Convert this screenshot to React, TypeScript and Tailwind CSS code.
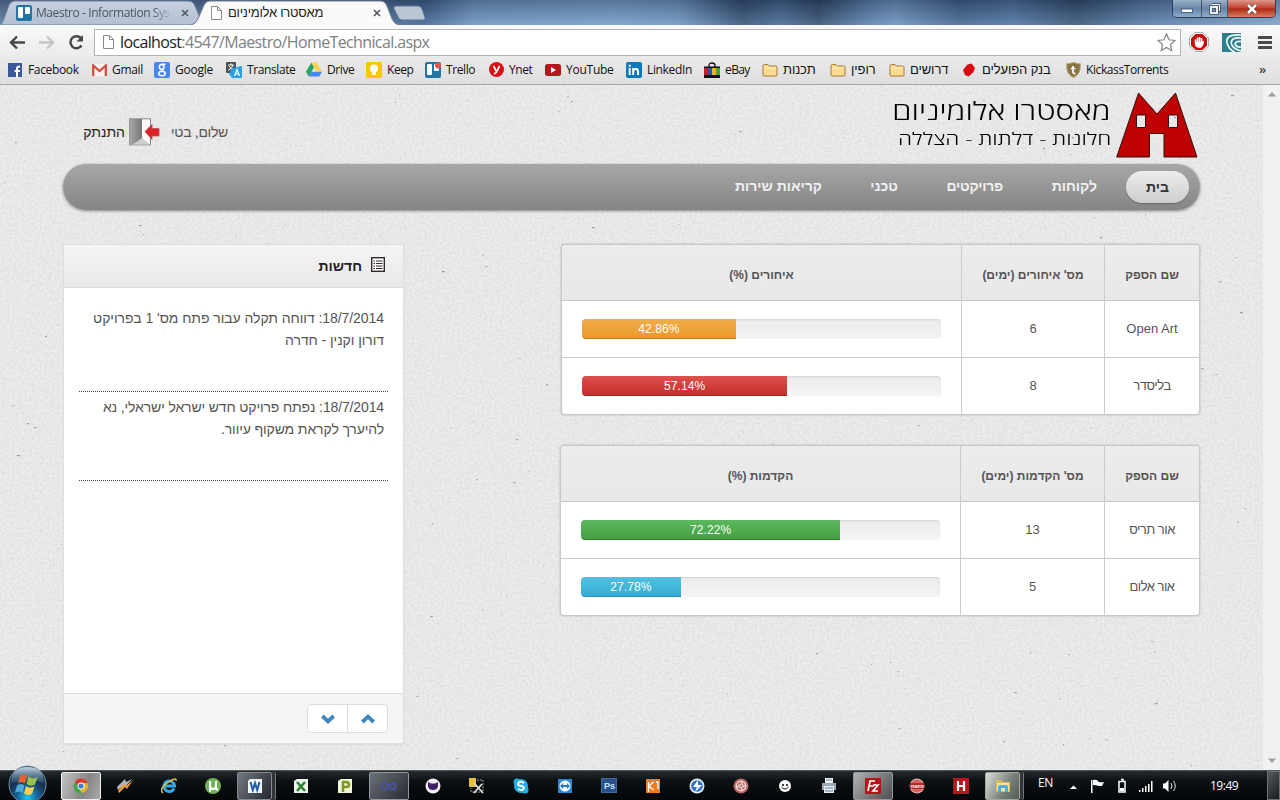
import React from "react";

const sans = "font-['Liberation_Sans',Arial,sans-serif]";
const ui = "font-['Open_Sans','Noto_Sans','Liberation_Sans',sans-serif]";

function PageIcon() {
  return (
    <svg width="11" height="14" viewBox="0 0 11 14" fill="#fdfdfd" stroke="#8a8a8a" className="shrink-0">
      <path d="M.5 .5H6.5L10.500 4.500V13.500H.5ZM6.500 .5V4.500H10.500" />
    </svg>
  );
}

function TrelloIcon({ dot = false }: { dot?: boolean }) {
  return (
    <svg width="16" height="16" viewBox="0 0 16 16" className="shrink-0">
      <rect width="16" height="16" rx="2" fill="#2175a3" />
      <rect x="2" y="2" width="5" height="11" rx="1" fill="#fff" />
      <rect x="9" y="2" width="5" height="7" rx="1" fill="#fff" />
      {dot && <circle cx="13" cy="3.500" r="3" fill="#ee4f4b" />}
    </svg>
  );
}

function Folder() {
  return (
    <svg width="16" height="16" viewBox="0 0 16 16">
      <path d="M1 13V4q0-1.500 1.500-1.500H6L7.500 4H13.500Q15 4 15 5.500V13Q15 14 14 14H2Q1 14 1 13Z" fill="#fbdc8f" stroke="#a87b34" />
      <path d="M2 6H14" stroke="#fff2c7" />
    </svg>
  );
}

const icons: Record<string, React.ReactNode> = {
  facebook: (
    <svg width="14" height="14" viewBox="0 0 14 14">
      <rect width="14" height="14" fill="#3b5998" />
      <path d="M9 14V8.500M9 8.500V5.500Q9 3.500 12 3.500M6.500 8H12" stroke="#fff" strokeWidth="2" fill="none" />
    </svg>
  ),
  gmail: (
    <svg width="15" height="12" viewBox="0 0 15 12">
      <rect width="15" height="12" rx="1" fill="#f6f3f2" />
      <path d="M1.200 12V1.500L7.500 7L13.800 1.500V12" stroke="#d5483b" strokeWidth="2.200" fill="none" />
    </svg>
  ),
  google: (
    <svg width="16" height="16" viewBox="0 0 16 16">
      <rect width="16" height="16" rx="2" fill="#4a86ee" />
      <g fill="none" stroke="#fff" strokeWidth="1.500">
        <ellipse cx="7.700" cy="5" rx="2.300" ry="2.500" />
        <ellipse cx="8" cy="11.500" rx="3.200" ry="2.300" />
        <path d="M7 2.300H11.500M9 7L8 8.500" />
      </g>
    </svg>
  ),
  translate: (
    <svg width="16" height="16" viewBox="0 0 16 16">
      <rect x="0" y="0" width="10" height="11" rx="1" fill="#4b4f55" />
      <path d="M2 3H8M5 1.500V3M7 3Q6 7 2 8.500M3 4Q5 8 8 8.500" stroke="#fff" fill="none" />
      <path d="M6 6L16 4V16H6L3 12Z" fill="#2aa1e0" />
      <path d="M8.500 14L11 7.500L13.500 14M9.500 12H12.500" stroke="#fff" strokeWidth="1.200" fill="none" />
    </svg>
  ),
  drive: (
    <svg width="17" height="15" viewBox="0 0 17 15">
      <path d="M5.700 0L8.500 5L3 15L0 10Z" fill="#1fa463" />
      <path d="M5.700 0H11.300L17 10H11.300Z" fill="#ffd04b" />
      <path d="M5.700 10H17L14 15H3Z" fill="#4688f4" />
    </svg>
  ),
  keep: (
    <svg width="16" height="16" viewBox="0 0 16 16">
      <rect width="16" height="16" rx="1" fill="#fbc700" />
      <circle cx="8" cy="6.500" r="4" fill="#fff" />
      <path d="M6 9H10V13H6Z" fill="#fff" />
    </svg>
  ),
  trello: <TrelloIcon dot />,
  ynet: (
    <svg width="15" height="15" viewBox="0 0 15 15">
      <circle cx="7.500" cy="7.500" r="7.500" fill="#d80f16" />
      <path d="M4.500 4L7.500 9.500M10.500 4L7.500 10Q6.800 11.800 4.800 11.500" stroke="#fff" strokeWidth="1.700" fill="none" />
    </svg>
  ),
  youtube: (
    <svg width="16" height="12" viewBox="0 0 16 12">
      <rect width="16" height="12" rx="2.500" fill="#b3181c" />
      <path d="M6 3L11 6L6 9Z" fill="#fff" />
    </svg>
  ),
  linkedin: (
    <svg width="16" height="16" viewBox="0 0 16 16">
      <rect width="16" height="16" rx="2" fill="#0a7bb8" />
      <path d="M3.700 6V13M3.700 2.800V4.800M7.200 13V6M7.200 9Q7.500 7 10 7Q12 7 12 9.500V13" stroke="#fff" strokeWidth="2" fill="none" />
    </svg>
  ),
  ebay: (
    <svg width="16" height="16" viewBox="0 0 16 16">
      <path d="M5 6V3.500Q5 1 8 1Q11 1 11 3.500V6" fill="none" stroke="#111" strokeWidth="1.300" />
      <rect y="5" width="4" height="9" fill="#c81b2b" />
      <rect x="4" y="5" width="4" height="9" fill="#2155b5" />
      <rect x="8" y="5" width="4" height="9" fill="#eeb715" />
      <rect x="12" y="5" width="4" height="9" fill="#55a02b" />
      <path d="M0 4.500H16V6H0ZM0 13H16V16H0Z" fill="#111" />
    </svg>
  ),
  folder: <Folder />,
  poalim: (
    <svg width="14" height="14" viewBox="0 0 14 14">
      <path d="M5.500 1.500L9.500 .5L13 5L11.500 9L6.500 13.500L3 12L1 7Z" fill="#d9050c" />
    </svg>
  ),
  kickass: (
    <svg width="15" height="16" viewBox="0 0 15 16">
      <path d="M.8 1.500Q3 2 7.500 .5Q12 2 14.200 1.500Q15.500 12 7.500 15.500Q-.5 12 .8 1.500Z" fill="#8b7444" stroke="#b8a678" />
      <path d="M7 4V10Q7 12 9.500 11.500M4.800 6.500H9.500" stroke="#fff" strokeWidth="1.700" fill="none" />
    </svg>
  ),
};

const hebrewLabel = "font-['Liberation_Sans',sans-serif] text-[13px] tracking-[-0.1px]";

const bookmarks: { icon: string; text: string; box: string; label?: string }[] = [
  { icon: "facebook", text: "Facebook", box: "w-[84px]", label: "tracking-[-0.35px]" },
  { icon: "gmail", text: "Gmail", box: "w-[63px]", label: "tracking-[-0.3px]" },
  { icon: "google", text: "Google", box: "w-[72px]", label: "tracking-[-0.25px]" },
  { icon: "translate", text: "Translate", box: "w-[80px]", label: "tracking-[-0.4px]" },
  { icon: "drive", text: "Drive", box: "w-[60px]", label: "tracking-[-0.4px]" },
  { icon: "keep", text: "Keep", box: "w-[59px]", label: "tracking-[-0.4px]" },
  { icon: "trello", text: "Trello", box: "w-[63px]", label: "tracking-[-0.4px]" },
  { icon: "ynet", text: "Ynet", box: "w-[57px]", label: "tracking-[-0.4px]" },
  { icon: "youtube", text: "YouTube", box: "w-[81px]", label: "tracking-[-0.25px]" },
  { icon: "linkedin", text: "LinkedIn", box: "w-[78px]", label: "tracking-[-0.35px]" },
  { icon: "ebay", text: "eBay", box: "w-[58px]", label: "tracking-[-0.6px]" },
  { icon: "folder", text: "תכנות", box: "w-[68px]", label: hebrewLabel },
  { icon: "folder", text: "רופין", box: "w-[59px]", label: hebrewLabel },
  { icon: "folder", text: "דרושים", box: "w-[72px]", label: hebrewLabel },
  { icon: "poalim", text: "בנק הפועלים", box: "w-[104px]", label: hebrewLabel },
  { icon: "kickass", text: "KickassTorrents", box: "w-[192px]", label: "tracking-[-0.4px]" },
];

function TabStrip() {
  return (
    <div className="relative h-[25px] shrink-0 overflow-hidden bg-[linear-gradient(90deg,#5c7898_0%,#4a678c_30%,#3b5b84_33%,#7397bf_37%,#7ba1ca_48%,#7397bf_53%,#2f4868_58%,#415f85_61%,#2c4260_64%,#5f82ab_68%,#6f93bb_70%,#3e5c82_75%,#4d6e97_79%,#2f4867_84%,#5a7ba3_90%,#89a7c9_100%)]">
      <div className="absolute inset-0 bg-[linear-gradient(180deg,rgba(20,35,60,.35),rgba(150,185,220,.3))]" />
      <svg className="absolute inset-0" width="440" height="25" viewBox="0 0 440 25">
        <defs>
          <linearGradient id="tabBack" x2="0" y2="1">
            <stop stopColor="#c6d0df" />
            <stop offset="1" stopColor="#b3c0d3" />
          </linearGradient>
        </defs>
        <path d="M0 25Q3 23 5 16L9 5Q11 1 15 1H188Q193 1 195 6L201 20Q203 25 207 25Z" fill="url(#tabBack)" stroke="#6d7f98" />
        <path d="M190 25.500Q196 24 198 19L204 5Q206 1 210 1H380Q385 1 387 6L392 19Q394 24 400 25.500Z" fill="#fafafa" stroke="#6f7f95" />
        <path d="M396 6H418Q421 6 422 9L425 17Q426 20 423 20H402Q399 20 398 17L394 9Q393 6 396 6Z" fill="#bac6d6" stroke="#60738e" />
      </svg>
      <div className={`relative flex h-[25px] items-center pl-4 text-[12px] ${ui}`}>
        <div className="flex w-[158px] items-center gap-1 text-[#4c5462]">
          <TrelloIcon />
          <span className="whitespace-nowrap tracking-[-0.42px] [mask-image:linear-gradient(90deg,#000_86%,rgba(0,0,0,.15))]">Maestro - Information Sys</span>
        </div>
        <span className="ml-[7px] w-[9px]"><Cross /></span>
        <div className="ml-[21px] flex w-[162px] items-center gap-[6px] whitespace-nowrap text-[#222]">
          <PageIcon />
          <span dir="rtl" className="font-['Liberation_Sans',sans-serif] text-[13px] tracking-[-0.25px]">מאסטרו אלומיניום</span>
        </div>
        <Cross />
      </div>
      <div className="absolute right-1 top-0 flex h-[18px] overflow-hidden rounded-b-[5px] border border-t-0 border-[#303f55]">
        <div className="flex w-[29px] items-center justify-center border-r border-[#42546e] bg-[linear-gradient(#9bb1cb,#6884a6_50%,#8daccd)]">
          <svg width="13" height="10" viewBox="0 0 13 10"><rect x=".5" y="5" width="11" height="3.500" fill="#fff" stroke="#516178" /></svg>
        </div>
        <div className="flex w-[26px] items-center justify-center border-r border-[#42546e] bg-[linear-gradient(#9bb1cb,#6884a6_50%,#8daccd)]">
          <svg width="12" height="12" viewBox="0 0 12 12" fill="none"><path d="M3 1H11V8H9" stroke="#46566c" strokeWidth="2.500" /><path d="M3 1.500H10.500V8" stroke="#fff" /><rect x="2" y="4" width="6" height="6" stroke="#46566c" strokeWidth="3.500" /><rect x="2" y="4" width="6" height="6" stroke="#fff" strokeWidth="1.800" /></svg>
        </div>
        <div className="flex w-[47px] items-center justify-center bg-[linear-gradient(#dc9789,#c2402f_48%,#ab2914_52%,#df7b5e)]">
          <svg width="12" height="10" viewBox="0 0 12 10"><path d="M2 1L10 9M10 1L2 9" stroke="#603232" strokeWidth="4" /><path d="M2 1L10 9M10 1L2 9" stroke="#fff" strokeWidth="2.500" /></svg>
        </div>
      </div>
    </div>
  );
}

function Cross() {
  return (
    <svg width="8" height="8" viewBox="0 0 8 8" className="shrink-0">
      <path d="M1 1L7 7M7 1L1 7" stroke="#555b64" strokeWidth="1.700" />
    </svg>
  );
}

function Toolbar() {
  return (
    <div className="flex h-[32px] shrink-0 items-center bg-[linear-gradient(#fafafa,#ebebeb)] pl-[9px] pt-[2px]">
      <svg width="84" height="20" viewBox="0 0 84 20" fill="none" strokeWidth="2.400" className="shrink-0">
        <path d="M16 10.500H2M8 4.500L2 10.500L8 16.500" stroke="#474747" />
        <path d="M30 10.500H44M38 4.500L44 10.500L38 16.500" stroke="#c6c6c6" />
        <path d="M72.500 7A6 6 0 1 0 72.500 13.500" stroke="#474747" />
        <path d="M74 3V9.500H67.500Z" fill="#474747" />
      </svg>
      <div className={`ml-px flex h-[27px] w-[1087px] items-center border border-[#b4b4b4] bg-white pl-2 pr-[4px] text-[16px] text-[#808080] ${ui}`}>
        <PageIcon />
        <span className="ml-[6px] tracking-[-0.63px]"><span className="text-[#222]">localhost</span>:4547/Maestro/HomeTechnical.aspx</span>
        <svg className="ml-auto" width="19" height="19" viewBox="0 0 19 19"><path d="M9.500 1L12 6.800L18 7.400L13.500 11.500L14.800 17.500L9.500 14.400L4.200 17.500L5.500 11.500L1 7.400L7 6.800Z" fill="#fff" stroke="#858585" strokeWidth="1.200" /></svg>
      </div>
      <svg className="ml-[8px]" width="20" height="20" viewBox="0 0 20 20">
        <path d="M6 .5H14L19.500 6V14L14 19.500H6L.5 14V6Z" fill="#fff" stroke="#aaa" />
        <path d="M6.500 2H13.500L18 6.500V13.500L13.500 18H6.500L2 13.500V6.500Z" fill="#c70d0d" />
        <path d="M6.500 7.500V11.500Q7 15 10 15Q13 15 13.500 12L14.500 9M8.500 11V5.500M10.500 11V5M12.500 11V6" stroke="#fff" strokeWidth="1.600" fill="none" />
        <path d="M7 10H13V13L10 15L7 13Z" fill="#fff" />
      </svg>
      <svg className="ml-[13px]" width="19" height="19" viewBox="0 0 19 19">
        <rect width="19" height="19" fill="#2f7f8c" />
        <path d="M19 2Q3 1 5 10Q7 17 13 19M19 5Q8 4 9.500 11Q11 16 19 18M19 8.500Q12 8 13.500 12Q15 14.500 19 14" stroke="#eef8f8" strokeWidth="1.700" fill="none" />
      </svg>
      <svg className="ml-[17px]" width="14" height="13" viewBox="0 0 14 13"><path d="M0 1.500H14M0 6.500H14M0 11.500H14" stroke="#4a4a4a" strokeWidth="2.800" /></svg>
    </div>
  );
}

function BookmarksBar() {
  return (
    <div className={`flex h-[28px] shrink-0 items-center overflow-hidden border-b border-[#a7a7a7] bg-[linear-gradient(#eaeaea,#dedede)] pb-[2px] pl-[7px] text-[12px] text-[#111] ${ui}`}>
      {bookmarks.map((b) => (
        <div key={b.text} className={`flex shrink-0 items-center gap-[5px] ${b.box}`}>
          <span className="flex w-[16px] shrink-0 justify-center">{icons[b.icon]}</span>
          <span className={`whitespace-nowrap ${b.label ?? ""}`}>{b.text}</span>
        </div>
      ))}
      <span className="ml-[2px] text-[13px] font-semibold text-[#444]">»</span>
    </div>
  );
}

const specks = Array.from({ length: 170 }, (_, i) => ({
  x: (i * 331 + 47 * ((i * i) % 17)) % 1260,
  y: (i * 197 + 29 * ((i * i) % 23)) % 684,
  w: 1 + (i % 3) * 0.9,
  o: 0.15 + (i % 5) * 0.07,
}));

function Paper() {
  return (
    <svg className="absolute inset-0" width="1263" height="685" viewBox="0 0 1263 685">
      <filter id="grain" x="0" y="0" width="100%" height="100%">
        <feTurbulence type="fractalNoise" baseFrequency="0.4" numOctaves="3" seed="8" />
        <feColorMatrix values="0.2 0 0 0 0.77  0.2 0 0 0 0.77  0.2 0 0 0 0.77  0 0 0 0 1" colorInterpolationFilters="sRGB" />
      </filter>
      <rect width="1263" height="685" fill="#e4e4e4" />
      <rect width="1263" height="685" filter="url(#grain)" opacity=".7" />
      {specks.map((s, i) => (
        <rect key={i} x={s.x} y={s.y} width={s.w} height="1.200" fill="#333" opacity={s.o} />
      ))}
    </svg>
  );
}

function Header() {
  return (
    <header className="flex h-[79px] items-start pl-[82px] pr-[65px] pt-[7px]">
      <div className={`mt-[26px] flex items-center text-[14px] ${sans}`}>
        <span dir="rtl" className="w-[43px] whitespace-nowrap text-[#222]">התנתק</span>
        <svg className="ml-[3px]" width="32" height="28" viewBox="0 0 32 28">
          <defs>
            <linearGradient id="door"><stop stopColor="#a7a7a7" /><stop offset="1" stopColor="#777" /></linearGradient>
          </defs>
          <rect x="1.500" y=".8" width="21" height="26" fill="#fafafa" stroke="#888" />
          <path d="M1.500 1H14V21L5 26.500H1.500Z" fill="url(#door)" />
          <path d="M5 26.500L14 20L22 26.500Z" fill="#ccc" />
          <path d="M17 13.500L24 6.500V10.500H31V18H24V21.500Z" fill="#df2024" stroke="#bb5153" strokeWidth=".8" />
        </svg>
        <span dir="rtl" className="ml-[11px] whitespace-nowrap tracking-[-0.3px] text-[#555]">שלום, בטי</span>
      </div>
      <div dir="rtl" className="ml-auto mr-[5px] mt-[3px] flex flex-col items-start whitespace-nowrap font-['Open_Sans','Noto_Sans',sans-serif] font-light text-black">
        <span className="origin-right scale-x-[1.25] text-[25px] leading-[30px]">מאסטרו אלומיניום</span>
        <span className="origin-right scale-x-[1.33] text-[17px] leading-[28px]">חלונות - דלתות - הצללה</span>
      </div>
      <svg width="82" height="67" viewBox="0 0 82 67">
        <path fillRule="evenodd" d="M22.500 1L41 22L59.500 1L81 65H48V41.500H33.500V65H.7ZM20.500 23V35.500H29.500V23ZM52.500 23V35.500H61.500V23Z" fill="#bd0000" stroke="#351010" />
      </svg>
    </header>
  );
}

function Nav() {
  return (
    <nav dir="rtl" className={`mx-[63px] flex h-[46px] w-[1137px] items-center rounded-full bg-[linear-gradient(#a7a7a7,#858585)] pb-px pr-[11px] text-[14px] font-bold text-[#f0f0f0] shadow-[0_1px_3px_rgba(0,0,0,.45)] ${sans}`}>
      <span className="flex h-[32px] w-[63px] items-center justify-center rounded-full bg-[linear-gradient(#ededed,#cdcdcd)] pt-px text-[#333] shadow-[0_1px_1px_rgba(0,0,0,.25)]">בית</span>
      <span className="mr-[29px] w-[94px] pb-px">לקוחות</span>
      <span className="w-[105px] pb-px tracking-[-0.25px]">פרויקטים</span>
      <span className="w-[76px] pb-px">טכני</span>
      <span className="pb-px">קריאות שירות</span>
    </nav>
  );
}

const news = [
  { text: "18/7/2014: דווחה תקלה עבור פתח מס' 1 בפרויקט דורון וקנין - חדרה", track: "tracking-[-0.06px]" },
  { text: "18/7/2014: נפתח פרויקט חדש ישראל ישראלי, נא להיערך לקראת משקוף עיוור.", track: "tracking-[-0.13px]" },
];

function News() {
  return (
    <section dir="rtl" className={`flex h-[500px] w-[341px] flex-col border border-[#dedede] bg-white text-[14px] shadow-[0_1px_1px_rgba(0,0,0,.05)] ${sans}`}>
      <div className="flex h-[43px] shrink-0 items-center gap-[9px] border-b border-[#ddd] bg-[linear-gradient(#f5f5f5,#e8e8e8)] pr-[18px] font-bold text-[#222]">
        <svg className="-mt-[3px]" width="14" height="15" viewBox="0 0 14 15"><rect x=".7" y=".7" width="12.600" height="13.600" fill="#fff" stroke="#332a30" strokeWidth="1.400" /><path d="M2.500 4H4M2.500 6.500H4M2.500 9H4M2.500 11.500H4M5 4H11.500M5 6.500H11.500M5 9H11.500M5 11.500H11.500" stroke="#332a30" strokeWidth="1.100" /></svg>
        <span>חדשות</span>
      </div>
      <div className="flex-1 px-[15px] pt-[15px]">
        {news.map((n) => (
          <p key={n.text} className={`h-[89px] border-b border-dotted border-[#444] pr-1 pt-[4px] leading-[22px] text-[#555] ${n.track}`}>{n.text}</p>
        ))}
      </div>
      <div className="h-[50px] shrink-0 border-t border-[#ddd] bg-[#f5f5f5] pr-[15px] pt-[10px]">
        <div className="flex h-[29px] w-[81px] rounded-[4px] border border-[#ddd] bg-white">
          <div className="flex flex-1 items-center justify-center"><Chevron up /></div>
          <div className="flex flex-1 items-center justify-center border-r border-[#ddd]"><Chevron /></div>
        </div>
      </div>
    </section>
  );
}

function Chevron({ up = false }: { up?: boolean }) {
  return (
    <svg width="14" height="10" viewBox="0 0 14 10">
      <path d={up ? "M1.300 8L7 2.700L12.700 8" : "M1.300 2L7 7.300L12.700 2"} fill="none" stroke="#4186bf" strokeWidth="3.800" />
    </svg>
  );
}

type Row = { name: string; days: number; pct: number; color: string; track: string };

function SupplierTable({ heads, rows, width, barCol }: { heads: string[]; rows: Row[]; width: string; barCol: string }) {
  return (
    <div dir="rtl" className={`flex h-[171px] flex-col overflow-hidden rounded-[4px] border border-[#c9c9c9] bg-white text-[13px] text-[#555] shadow-[0_0_2px_rgba(0,0,0,.25)] ${sans} ${width}`}>
      <div className="flex h-[55px] shrink-0 bg-[linear-gradient(#ececec,#e8e8e8)] text-[12px] font-bold">
        <div className="flex w-[94px] items-center justify-center pt-[5px]">{heads[0]}</div>
        <div className={`flex items-center justify-center border-r border-[#ccc] pt-[5px] ${barCol}`}>{heads[1]}</div>
        <div className="flex flex-1 items-center justify-center border-r border-[#ccc] pt-[5px]">{heads[2]}</div>
      </div>
      {rows.map((r) => (
        <div key={r.name} className="flex h-[57px] shrink-0 border-t border-[#c9c9c9]">
          <div className={`flex w-[94px] items-center justify-center ${r.track}`}>{r.name}</div>
          <div className={`flex items-center justify-center border-r border-[#ccc] ${barCol}`}>{r.days}</div>
          <div dir="ltr" className="flex flex-1 items-center border-r border-[#ccc] px-[20px]">
            <div className="h-[20px] w-full overflow-hidden rounded-[4px] bg-[linear-gradient(#ebebeb,#f5f5f5)] shadow-[inset_0_1px_2px_rgba(0,0,0,.1)]">
              <div className={`flex h-full items-center justify-center text-[12px] tracking-[0.1px] text-white shadow-[inset_0_-1px_0_rgba(0,0,0,.18)] ${r.color}`} style={{ width: `${r.pct}%` }}>{r.pct}%</div>
            </div>
          </div>
        </div>
      ))}
    </div>
  );
}

const late: Row[] = [
  { name: "Open Art", days: 6, pct: 42.86, color: "bg-[linear-gradient(#f0ad4e,#eb9722)]", track: "tracking-normal" },
  { name: "בליסדר", days: 8, pct: 57.14, color: "bg-[linear-gradient(#dc514d,#c62c2a)]", track: "tracking-[-0.45px]" },
];
const early: Row[] = [
  { name: "אור תריס", days: 13, pct: 72.22, color: "bg-[linear-gradient(#5cb85c,#429f42)]", track: "tracking-[-0.5px]" },
  { name: "אור אלום", days: 5, pct: 27.78, color: "bg-[linear-gradient(#55bfdf,#31add3)]", track: "tracking-[-0.5px]" },
];

function Page() {
  return (
    <main className="relative h-[685px] flex-1 overflow-hidden">
      <Paper />
      <div className="relative">
        <Header />
        <Nav />
        <div className="ml-[63px] mt-[34px] flex w-[1137px] items-start justify-between">
          <News />
          <div className="flex flex-col items-end gap-[30px]">
            <SupplierTable heads={["שם הספק", "מס' איחורים (ימים)", "איחורים (%)"]} rows={late} width="w-[639px]" barCol="w-[143px]" />
            <SupplierTable heads={["שם הספק", "מס' הקדמות (ימים)", "הקדמות (%)"]} rows={early} width="w-[640px]" barCol="w-[144px]" />
          </div>
        </div>
      </div>
    </main>
  );
}

function ScrollBar() {
  return (
    <div className="flex w-[17px] flex-col items-center justify-between bg-[#f1f1f1] py-[7px]">
      <svg width="8" height="5" viewBox="0 0 8 5"><path d="M0 4.500L4 0L8 4.500Z" fill="#9d9d9d" /></svg>
      <svg width="8" height="5" viewBox="0 0 8 5"><path d="M0 .5L4 5L8 .5Z" fill="#9d9d9d" /></svg>
    </div>
  );
}

const apps: { id: string; look?: string; art: React.ReactNode }[] = [
  {
    id: "chrome",
    look: "border-[#eee] bg-[linear-gradient(110deg,#c5c5c5,#858585_60%,#aaa)]",
    art: (
      <>
        <circle cx="8" cy="8" r="7" fill="#e2b828" />
        <path d="M2 4A7 7 0 0 1 14.500 5H8L5 9Z" fill="#d83a2e" />
        <path d="M2 4L6 11L9 15A7 7 0 0 1 2 4Z" fill="#3da650" />
        <circle cx="8" cy="8" r="3.500" fill="#fff" />
        <circle cx="8" cy="8" r="2.600" fill="#3f7ed2" />
      </>
    ),
  },
  { id: "winamp", art: <><path d="M0 9L8 1L9 4L15 1L9 8H6L1 12Z" fill="#b5b5b5" /><path d="M1 13L7 6L9 8L16 2L10 11L8 9L2 15Z" fill="#f09c35" /></> },
  { id: "ie", art: <g fill="none"><path d="M13 10.500A5.300 5.300 0 1 1 13.500 8H4" stroke="#37a9e7" strokeWidth="3" /><path d="M2 15Q-3 11 9 3Q16-1 15 3" stroke="#e7b83f" strokeWidth="1.500" /></g> },
  { id: "utorrent", art: <><circle cx="8" cy="8" r="8" fill="#72b256" /><path d="M5 3V8Q5 11 8 11Q11 11 11 8V3M11 8V11L13 12M5 8V14" stroke="#fff" strokeWidth="2" fill="none" /></> },
  { id: "word", look: "border-[#848b94] bg-[linear-gradient(120deg,#737980,#24292e)]", art: <><path d="M1 3L3 1H15V15H1Z" fill="#eef4fb" /><path d="M3.500 4L5.800 12L8 5L10.200 12L12.500 4" stroke="#235ca7" strokeWidth="2" fill="none" /></> },
  { id: "excel", art: <><path d="M1 3L4 1H15V15H1Z" fill="#edf5e9" /><path d="M4 4L12 13M12 4L4 13" stroke="#2a8335" strokeWidth="2.600" /></> },
  { id: "publisher", art: <><path d="M1 3L4 1H15V15H1Z" fill="#f2f5d8" /><path d="M6 14V4H9Q12 4 12 7Q12 9 9 9H6" stroke="#7d9822" strokeWidth="2.500" fill="none" /></> },
  { id: "visual-studio", look: "border-[#92989d] bg-[linear-gradient(130deg,#6a7177,#272c31)]", art: <path d="M8 8Q4 3 2 6Q0 9 3 11Q6 12 8 8Q11 4 14 6Q16 9 13 11Q11 12 8 8" stroke="#4a51a3" strokeWidth="2" fill="none" /> },
  { id: "github", art: <><circle cx="8" cy="8" r="7.500" fill="#f0edf5" /><path d="M3 8.500V4L6 5.500H10L13 4V8.500Q12 12 8 12Q4 12 3 8.500Z" fill="#3e2264" /></> },
  { id: "designer", art: <><rect width="7" height="9" fill="#e4c03d" /><path d="M8 2H14V14H2V10" fill="none" stroke="#96a082" strokeDasharray="2 1" /><path d="M5 15L13 6M5 5L14 15" stroke="#ddd" strokeWidth="1.800" /></> },
  { id: "skype", art: <><circle cx="8" cy="8" r="7" fill="#23aee6" /><circle cx="4" cy="4" r="3.500" fill="#23aee6" /><circle cx="12" cy="12" r="3.500" fill="#23aee6" /><path d="M11 5Q6 2 5 6Q5 8 9 8Q13 10 9 12Q7 12 5 11" fill="none" stroke="#fff" strokeWidth="1.900" /></> },
  { id: "teamviewer", art: <><rect x="1" y="1" width="14" height="14" fill="#2788d7" /><circle cx="8" cy="8" r="5.500" fill="#f2f8fd" /><path d="M3 8L6 5V7H10V5L13 8L10 11V9H6V11Z" fill="#2676bf" /></> },
  { id: "photoshop", art: <><rect x=".5" y=".5" width="15" height="14" fill="#29518b" stroke="#41689c" /><text x="3" y="11" fontSize="9" fontWeight="bold" fill="#cae3ff" fontFamily="Liberation Sans">Ps</text></> },
  { id: "kl", art: <><rect x="1" y="1" width="14" height="14" fill="#ef7d1f" /><path d="M3.500 14V4M8.500 4L4 8L8.500 12M11 4H13V11" stroke="#fff" strokeWidth="1.300" fill="none" /></> },
  { id: "daemon", art: <><circle cx="8" cy="8" r="7.500" fill="#e2edf8" /><circle cx="8" cy="8" r="5.800" fill="#2d71c9" /><path d="M9 2L4 9H8L6 14L13 7H9Z" fill="#fff" /></> },
  { id: "swirl", art: <><circle cx="8" cy="8" r="7.500" fill="#bd6565" /><circle cx="8" cy="8" r="4.800" fill="none" stroke="#efdcdc" strokeWidth="1.300" /><path d="M8 3L10 8M13 7L8 10M10 13L6 8M3 10L8 6" stroke="#efdcdc" strokeWidth="1.200" /></> },
  { id: "smile", art: <><circle cx="8" cy="8" r="6" fill="#fff" /><circle cx="6" cy="7" r="1" /><circle cx="10" cy="7" r="1" /><path d="M4.500 9Q8 13 11.500 9" fill="none" stroke="#111" /></> },
  { id: "printer", art: <><path d="M4 0H12V6H4Z" fill="#f4f4f4" /><path d="M1 5H15V12H1Z" fill="#99a6b3" /><path d="M3 8H13V15H3Z" fill="#e8eef3" /><path d="M4 10H12M4 13H12M5 2H11" stroke="#607e9a" /></> },
  { id: "filezilla", look: "border-[#92989d] bg-[linear-gradient(130deg,#b1b1b1,#4e4e4e)]", art: <><rect width="16" height="16" rx="1" fill="#b11517" /><path d="M3 13L5 3H10M4 8H9M8 7H13L8 13H13" stroke="#fff" strokeWidth="1.700" fill="none" /></> },
  { id: "nero", art: <><circle cx="8" cy="8" r="7.500" fill="#dba5a2" /><circle cx="8" cy="8" r="6.200" fill="#d5625d" /><rect x="1" y="5" width="14" height="6" fill="#b4282a" /><text x="2" y="10" fontSize="6" fontWeight="bold" fill="#fff" fontFamily="Liberation Sans">nero</text></> },
  { id: "h", art: <><rect width="16" height="16" fill="#af1b1c" /><path d="M5 3V13M11 3V13M5 8H11" stroke="#fff" strokeWidth="2.200" /></> },
  { id: "explorer", look: "border-[#a4a79e] bg-[linear-gradient(120deg,#dedfdb,#78807a_60%,#535b56)]", art: <><path d="M1 2H6L8 4H15V14H1Z" fill="#dfb859" /><path d="M2 5H14V13H2Z" fill="#f8e49b" /><path d="M3 14V9Q3 7 5 7H11Q13 7 13 9V14H10V10H6V14Z" fill="#4daedd" /></> },
];

function Taskbar() {
  return (
    <footer className={`relative z-10 flex h-[30px] shrink-0 items-center border-t border-[#54595e] bg-[linear-gradient(#252b2f,#0b1013_35%,#040608)] text-white ${ui}`}>
      <div className="flex w-[59px] justify-center pr-[5px]">
        <svg className="relative -top-[1px] shrink-0" width="39" height="39" viewBox="0 0 39 39">
          <defs>
            <radialGradient id="orb" cx=".5" cy=".85"><stop stopColor="#22c6f4" /><stop offset=".55" stopColor="#176499" /><stop offset="1" stopColor="#183251" /></radialGradient>
            <linearGradient id="shine" x2="0" y2="1"><stop stopColor="#d9eaf4" stopOpacity=".9" /><stop offset="1" stopColor="#6d9ab8" stopOpacity=".2" /></linearGradient>
          </defs>
          <circle cx="19.500" cy="19.500" r="18.500" fill="url(#orb)" stroke="#7892a4" />
          <path d="M3 18Q3 2 19.500 2Q36 2 36 18Q19 13 3 18Z" fill="url(#shine)" />
          <path d="M12 11Q16 8 19 11L17 18.500Q14 16 10 18.500Z" fill="#e66232" />
          <path d="M20.500 11.500Q25 15 29.500 12L27 19.500Q23 22 18.500 19Z" fill="#9ac34c" />
          <path d="M9 20.500Q13 17.500 16.500 20.500L14.500 28Q11 25 7 28Z" fill="#52a9dc" />
          <path d="M18 21Q22 24 26.500 21.500L24 29Q20 31 16 28.500Z" fill="#f9ce48" />
        </svg>
      </div>
      {apps.map((a) => (
        <div key={a.id} className="flex h-[29px] w-[44px] shrink-0 items-center px-[2px]">
          {a.id === "word" || a.id === "explorer" ? (
            <div className="flex h-[28px] w-[40px]">
              <div className={`flex w-[35px] items-center justify-center rounded-[2px] border ${a.look}`}><AppArt>{a.art}</AppArt></div>
              <div className="w-[4px] rounded-r-[2px] border-r border-[#777] bg-[#30353a]" />
            </div>
          ) : (
            <div className={`flex h-[28px] w-[40px] items-center justify-center rounded-[2px] ${a.look ? `border ${a.look}` : ""}`}><AppArt>{a.art}</AppArt></div>
          )}
        </div>
      ))}
      <span className="ml-[11px] w-[31px] shrink-0 pb-[5px] text-[12px] tracking-[-0.4px]">EN</span>
      <svg width="112" height="18" viewBox="0 0 112 18" fill="#fff" className="shrink-0">
        <path d="M1 12L4.500 8.500L8 12Z" />
        <path d="M22 3H23.500V16H22ZM24 3Q27 2 29 4Q29 6 35 5L33 9H30Q27 8 24 8Z" />
        <path d="M50 4.500H56V15H50ZM52 2.500H54V4" fill="none" stroke="#fff" strokeWidth="1.500" />
        <path d="M51 11H55V14H51Z" />
        <path d="M70 13H71.500V15H70ZM73 11H74.500V15H73ZM76 9H77.500V15H76ZM79 7H80.500V15H79ZM82 4H83.500V15H82Z" />
        <path d="M94 6.500H96L99.500 3V15L96 11.500H94Z" />
        <path d="M102 6Q104 9 102 12M104.500 4Q108 9 104.500 14" fill="none" stroke="#ddd" />
      </svg>
      <span className="ml-[29px] w-[28px] shrink-0 text-[12px] tracking-[-0.5px]">19:49</span>
      <div className="ml-auto h-[29px] w-[13px] shrink-0 border border-[#6c7074] bg-[linear-gradient(130deg,#555b60,#171b1e)]" />
    </footer>
  );
}

function AppArt({ children }: { children: React.ReactNode }) {
  return <svg width="16" height="16" viewBox="0 0 16 16" className="shrink-0">{children}</svg>;
}

export default function App() {
  return (
    <div className="flex h-[800px] w-[1280px] flex-col overflow-hidden bg-[#e6e6e6]">
      <TabStrip />
      <Toolbar />
      <BookmarksBar />
      <div className="flex h-[685px] shrink-0">
        <Page />
        <ScrollBar />
      </div>
      <Taskbar />
    </div>
  );
}
